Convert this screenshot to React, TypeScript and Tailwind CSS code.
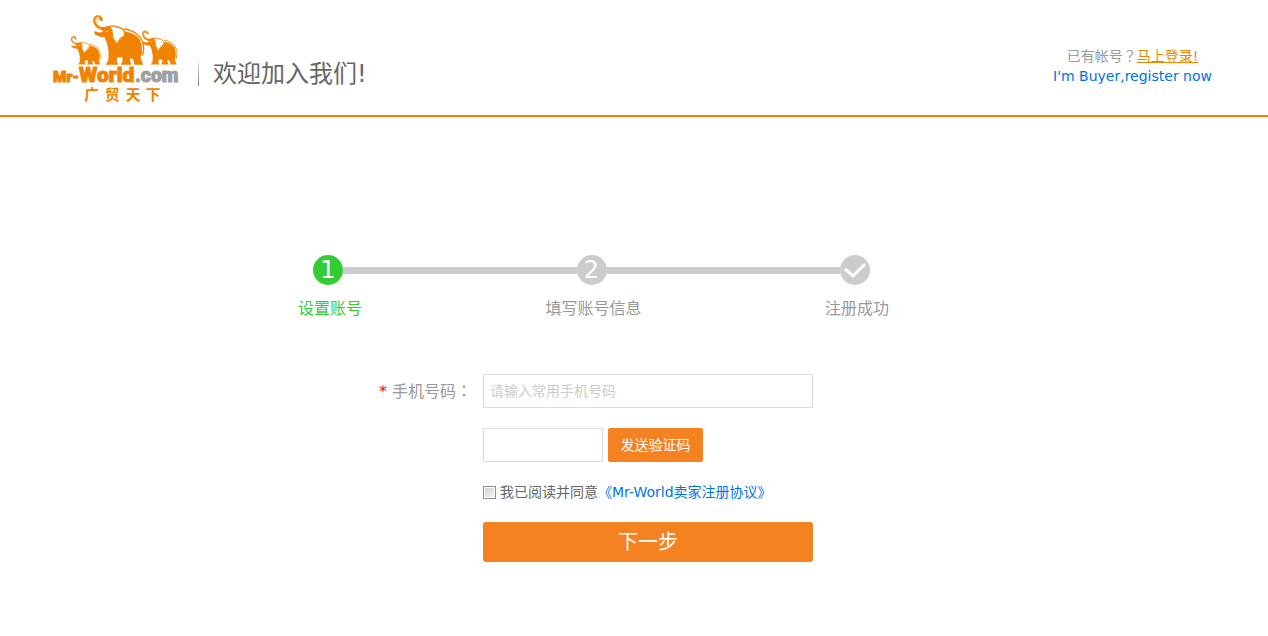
import { useState, type FormEvent } from 'react';
import clsx from 'clsx';

type Step = {
  mark: '1' | '2' | 'check';
  label: string;
};

const steps: Step[] = [
  { mark: '1', label: '设置账号' },
  { mark: '2', label: '填写账号信息' },
  { mark: 'check', label: '注册成功' },
];

const Elephant = ({ transform }: { transform: string }) => (
  <g transform={transform}>
    {/* body and legs */}
    <path
      fill="#f08300"
      d="M52 60 L70 88 L92 64 L97 49 Q120 52 133 64 Q147 78 148 100 L146 116 L144 121 Q141 128 146 138 L151 149 H124 L121 134 L113 129 L110 136 L116 149 H84 L89 136 L88 127 Q80 129 74 126 L71 136 L75 149 H38 L46 136 L47 108 L41 82 L32 60 Z"
    />
    {/* back outline and tail */}
    <path
      fill="none"
      stroke="#f08300"
      strokeWidth="4"
      strokeLinecap="round"
      d="M95 42 Q118 46 134 59 Q152 75 152 103 L149 120"
    />
    <path
      fill="none"
      stroke="#fff"
      strokeWidth="2"
      d="M98 47 Q108 54 114 52 Q122 60 130 60 Q137 70 142 74 Q149 88 148 106"
    />
    {/* head and lower lip */}
    <path
      fill="#f08300"
      d="M12 33 Q26 42 40 34 L56 32 L58 70 L52 84 Q42 78 37 67 Q22 67 6 59 L3 49 L16 52 Q26 54 30 48 Z"
    />
    {/* trunk */}
    <path
      fill="none"
      stroke="#f08300"
      strokeWidth="9"
      strokeLinecap="round"
      d="M25 14 Q22 4 13 5 Q4 8 5 19 Q8 33 24 40 L40 41"
    />
    <path fill="none" stroke="#fff" strokeWidth="2" d="M21 8 Q15 4 10 9 Q5 14 9 23 Q14 32 24 37" />
    {/* ear */}
    <path
      fill="#fff"
      stroke="#f08300"
      strokeWidth="4"
      strokeLinejoin="round"
      d="M50 35 Q60 30 70 36 Q86 36 94 49 Q98 57 92 65 Q82 68 79 76 Q76 84 71 87 Q67 79 62 73 Q57 66 58 56 Q58 44 50 35 Z"
    />
    <path fill="#fff" d="M37 48 L46 47 L42 52 Z" />
  </g>
);

const Logo = () => (
  <svg
    viewBox="36 27 384 264"
    className="h-[88px] w-[128px] overflow-visible"
    role="img"
    aria-label="Mr-World.com"
  >
    <Elephant transform="translate(92 93) scale(0.59 0.575)" />
    <Elephant transform="translate(159 30)" />
    <Elephant transform="translate(306 76) scale(0.69)" />
    <g fontFamily="Roboto, sans-serif" fontWeight="900" strokeWidth="3">
      <text x="39" y="232" fontSize="46" fill="#f08300" stroke="#f08300">
        Mr-
      </text>
      <text x="117" y="232" fontSize="63" fill="#f08300" stroke="#f08300">
        World
      </text>
      <text x="285" y="232" fontSize="58" fill="#9fa0a0" stroke="#9fa0a0">
        .com
      </text>
    </g>
    {/* one x per character spreads the name under the wordmark */}
    <text
      x="133 195 257 317"
      y="284"
      fontSize="44"
      fontWeight="bold"
      fill="#f08300"
      fontFamily="'Noto Sans CJK SC', sans-serif"
    >
      广贸天下
    </text>
  </svg>
);

const StepBar = () => (
  <ol className="flex justify-between">
    {steps.map((step, index) => (
      <li
        key={step.mark}
        className={clsx(
          'flex flex-col items-center',
          index === 0 ? 'text-[#33cc33]' : 'text-[#999999]',
          index < steps.length - 1 && 'grow'
        )}
      >
        <div className="flex w-full items-center">
          <span
            className={clsx(
              'flex size-[30px] shrink-0 items-center justify-center rounded-full text-2xl leading-[30px] text-white',
              index === 0 ? 'bg-[#33cc33]' : 'bg-[#cccccc]'
            )}
          >
            {step.mark === 'check' ? (
              <svg viewBox="0 0 30 30" className="size-[30px]" aria-hidden="true">
                <path d="M5 14 L13 21 L25 9" fill="none" stroke="#fff" strokeWidth="3" />
              </svg>
            ) : (
              step.mark
            )}
          </span>
          {index < steps.length - 1 && <span className="h-[7px] grow bg-[#cccccc]" />}
        </div>
        <div className="mt-3 flex w-[34px] justify-center self-start text-base leading-6 whitespace-nowrap">
          {step.label}
        </div>
      </li>
    ))}
  </ol>
);

export default function App() {
  const [phone, setPhone] = useState('');
  const [code, setCode] = useState('');
  const [isAgreed, setIsAgreed] = useState(false);

  const handleSubmit = (event: FormEvent) => {
    event.preventDefault();
  };

  return (
    <div
      lang="zh-CN"
      className="bg-white font-['DejaVu_Sans','Noto_Sans_CJK_SC',sans-serif] text-sm text-[#666666]"
    >
      <header className="border-b-2 border-[#f08300]">
        <div className="mx-auto flex h-[115px] max-w-[1164px] justify-between pt-3.5">
          <div className="flex">
            <a href="#home">
              <Logo />
            </a>
            <span className="mt-11 ml-[18px] h-7 w-px bg-linear-to-b from-white to-[#777777]" />
            <h1 className="mt-10 ml-3.5 text-2xl leading-10">欢迎加入我们!</h1>
          </div>
          <div className="mt-[31px] mr-1 text-center leading-5">
            <p className="text-[#999999]">
              已有帐号
              <span lang="zh-TW" className="font-['Noto_Sans_CJK_TC',sans-serif]">
                ？
              </span>
              <a href="#login" className="text-[#f08300] underline underline-offset-1">
                马上登录!
              </a>
            </p>
            <a href="#buyer" className="block text-[#0073e6]">
              I'm Buyer,register now
            </a>
          </div>
        </div>
      </header>

      <main className="mx-auto max-w-[1170px] pt-[138px] pb-[74px]">
        <div className="ml-[264px] max-w-[561px]">
          <StepBar />
        </div>

        <form
          onSubmit={handleSubmit}
          className="mt-[53px] ml-[314px] grid grid-cols-[120px_330px] gap-y-5"
        >
          <label htmlFor="phone" className="h-[34px] pl-4 text-base leading-8 text-[#999999]">
            <span className="text-[#ff0000]">*</span> 手机号码
            <span lang="zh-TW" className="font-['Noto_Sans_CJK_TC',sans-serif]">
              ：
            </span>
          </label>
          <input
            id="phone"
            type="tel"
            value={phone}
            onChange={event => setPhone(event.target.value)}
            placeholder="请输入常用手机号码"
            className="h-[34px] border border-[#dddddd] px-1.5 text-sm outline-none placeholder:text-[#cccccc]"
          />

          <div className="col-start-2 flex gap-[5px]">
            <input
              type="text"
              aria-label="验证码"
              value={code}
              onChange={event => setCode(event.target.value)}
              className="h-[34px] w-[120px] border border-[#dddddd] px-1.5 outline-none"
            />
            <button type="button" className="h-[34px] w-[95px] rounded-xs bg-[#f58220] text-white">
              发送验证码
            </button>
          </div>

          <div className="col-start-2 flex h-5 items-center leading-5 whitespace-nowrap">
            <input
              id="agree"
              type="checkbox"
              checked={isAgreed}
              onChange={event => setIsAgreed(event.target.checked)}
              className="mr-1 size-[13px] appearance-none border border-[#8e8f8f] bg-linear-to-br from-[#cdd0d3] to-[#f6f6f6] ring-1 ring-white ring-inset checked:bg-[#f58220] checked:bg-none"
            />
            <label htmlFor="agree">我已阅读并同意</label>
            <a href="#agreement" className="text-[#0073e6]">
              《Mr-World卖家注册协议》
            </a>
          </div>

          <button
            type="submit"
            className="col-start-2 h-10 rounded-[3px] bg-[#f58220] text-xl text-white"
          >
            下一步
          </button>
        </form>
      </main>
    </div>
  );
}
